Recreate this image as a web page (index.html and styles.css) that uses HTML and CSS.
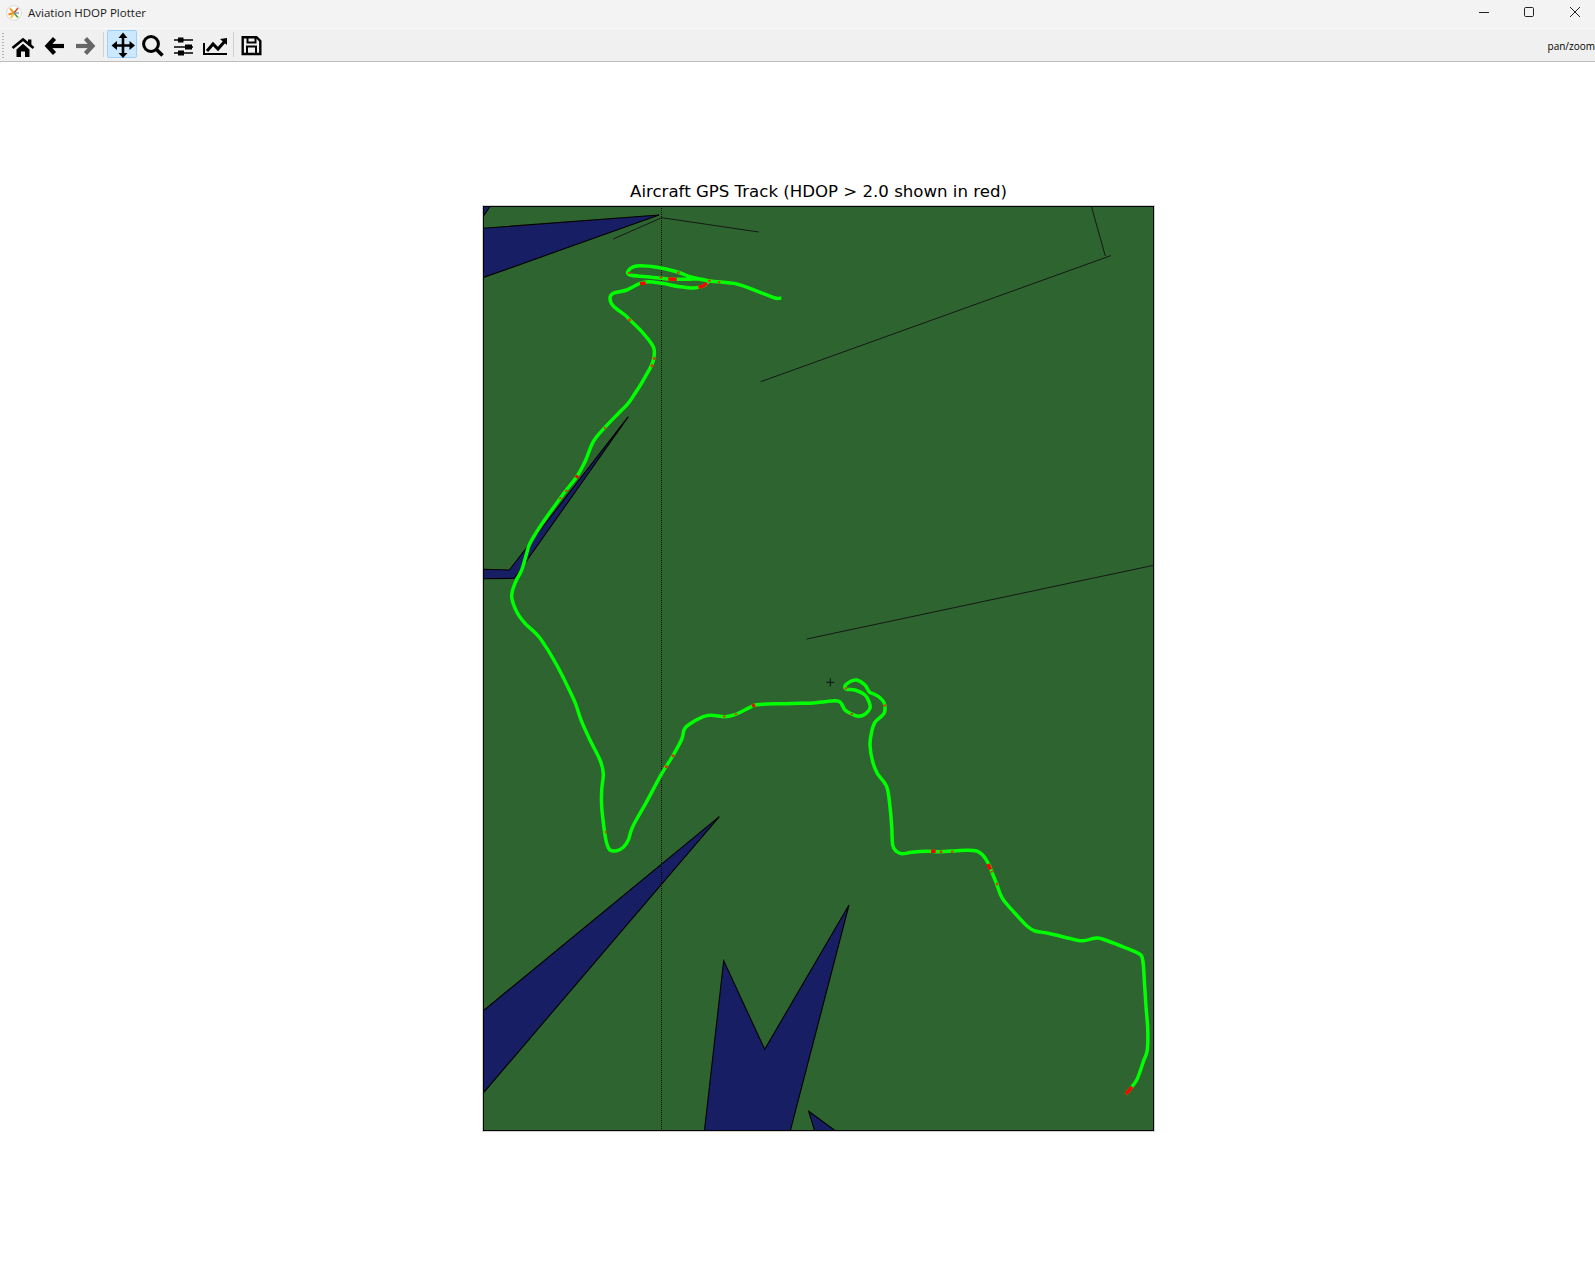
FILE: index.html
```html
<!DOCTYPE html>
<html lang="en">
<head>
<meta charset="utf-8">
<title>Aviation HDOP Plotter</title>
<link rel="stylesheet" href="styles.css">
</head>
<body>
<header class="titlebar">
  <svg class="app-icon" viewBox="0 0 16 16">
    <circle cx="8" cy="8" r="7.4" fill="#fdfcf8" stroke="#d4d0c8" stroke-width="0.8"/>
    <path d="M8 8 L4 3.5" stroke="#f0a030" stroke-width="2"/>
    <path d="M8 8 L12 3" stroke="#c84a2a" stroke-width="1.4"/>
    <path d="M8 8 L2.5 9.5" stroke="#f08020" stroke-width="2.2"/>
    <path d="M8 8 L5 13" stroke="#f5c040" stroke-width="2"/>
    <path d="M8 8 L12 12.5" stroke="#5a9a40" stroke-width="1.6"/>
    <path d="M8 8 L13 8" stroke="#6a88b8" stroke-width="1.2"/>
  </svg>
  <span class="app-title">Aviation HDOP Plotter</span>
  <div class="window-controls">
    <svg class="win-btn" viewBox="0 0 10 10"><path d="M0 5.5H10" class="win-stroke"/></svg>
    <svg class="win-btn" viewBox="0 0 10 10"><rect x="0.5" y="0.5" width="9" height="9" rx="1.2" class="win-stroke"/></svg>
    <svg class="win-btn" viewBox="0 0 10 10"><path d="M0 0L10 10M10 0L0 10" class="win-stroke"/></svg>
  </div>
</header>

<nav class="toolbar">
  <div class="grip"></div>
  <button class="tool" aria-label="Home"><svg viewBox="0 0 30 28">
    <polyline points="4.5,18 15,9.5 25.5,18" fill="none" stroke="#000" stroke-width="2.6"/>
    <rect x="20" y="9.5" width="3.4" height="6"/>
    <path d="M8.5 19.5L15 13.8L21.5 19.5V27H17V21.5H13V27H8.5Z"/>
  </svg></button>
  <button class="tool" aria-label="Back"><svg viewBox="0 0 30 28">
    <polyline points="15.5,8.5 8.5,16 15.5,23.5" fill="none" stroke="#000" stroke-width="4.2"/>
    <path d="M9 16H25" stroke="#000" stroke-width="4.2"/>
  </svg></button>
  <button class="tool" aria-label="Forward"><svg viewBox="0 0 30 28">
    <polyline points="15.5,8.5 22.5,16 15.5,23.5" fill="none" stroke="#666" stroke-width="4.2"/>
    <path d="M6 16H22" stroke="#666" stroke-width="4.2"/>
  </svg></button>
  <div class="sep sep-a"></div>
  <button class="tool active" aria-label="Pan"><svg viewBox="0 0 30 28">
    <path d="M16 6V25M7 15.5H25" stroke="#000" stroke-width="2.6"/>
    <path d="M16 2.5L11.5 8H20.5ZM16 28L11.5 23H20.5ZM4.5 15.5L10 11V20ZM28 15.5L22.5 11V20Z"/>
  </svg></button>
  <button class="tool" aria-label="Zoom"><svg viewBox="0 0 30 28">
    <circle cx="13" cy="14" r="7.4" fill="none" stroke="#000" stroke-width="3"/>
    <path d="M18.5 19.5L24.5 25.5" stroke="#000" stroke-width="3.6"/>
  </svg></button>
  <button class="tool" aria-label="Subplots"><svg viewBox="0 0 30 28">
    <path d="M5 10H24M5 17H24M5 23H24" stroke="#000" stroke-width="1.6"/>
    <rect x="9" y="7.5" width="5.5" height="5"/>
    <rect x="16" y="14.5" width="7" height="5"/>
    <rect x="9" y="20.5" width="6" height="5"/>
  </svg></button>
  <button class="tool" aria-label="Customize"><svg viewBox="0 0 30 28">
    <polyline points="4,13 4,24 27,24" fill="none" stroke="#000" stroke-width="2"/>
    <polyline points="7,21 13,14 18,19 25,11" fill="none" stroke="#000" stroke-width="3"/>
    <path d="M20 9L27 8V15Z"/>
  </svg></button>
  <div class="sep sep-b"></div>
  <button class="tool" aria-label="Save"><svg viewBox="0 0 30 28">
    <path d="M5.7 7.2H19.5L23.3 11V24H5.7Z" fill="none" stroke="#000" stroke-width="2.4"/>
    <path d="M10.5 7.5V12.5H18.5V7.5M10 24V16.5H19V24" fill="none" stroke="#000" stroke-width="2"/>
  </svg></button>
  <span class="mode">pan/zoom</span>
</nav>

<main class="canvas">
  <figure class="figure">
    <figcaption class="plot-title">Aircraft GPS Track (HDOP &gt; 2.0 shown in red)</figcaption>
    <svg class="axes" viewBox="483 206 671 925">
      <rect class="land" x="483" y="206" width="671" height="925"/>
      <polygon class="water" points="483,228.3 659,215 483,277.7"/>
      <polygon class="water" points="483,206.5 490,206.5 483,216.7"/>
      <polygon class="water" points="628.3,416.7 509.3,570 483,569.3 483,578.7 514.3,578.3"/>
      <polygon class="water" points="483,1011 719.3,816.7 483,1093.3"/>
      <polygon class="water" points="704.3,1132 723.7,960.7 764.7,1049.3 849,905 790,1132"/>
      <polygon class="water" points="808.7,1111.3 837,1132 815,1132"/>
      <polyline class="coast" points="613.3,239 661.7,217.7 758.7,232"/>
      <polyline class="coast" points="760.7,381.7 1110.7,255.7"/>
      <polyline class="coast" points="1091.3,206 1105.3,256"/>
      <polyline class="coast" points="806.7,639 1155,565"/>
      <line class="meridian" x1="661.5" y1="206" x2="661.5" y2="1131"/>
      <path class="marker" d="M826.3 682.3H834.3M830.3 678.3V686.3"/>
      <path class="track" data-points="1126,1094.3 1132.7,1085.7 1136.7,1080 1140,1071.7 1143.3,1061.7 1147.3,1050 1147.7,1028.3 1146,1006.7 1144.3,980 1142.7,960 1138.3,953.3 1118.3,945 1101.7,938.7 1095,938.3 1083.3,940.7 1075,939.7 1048.3,933.3 1035,931 1026.7,925.7 1015,913.3 1004,900.7 1000,893.3 996.7,884 991.7,871.7 988.3,863.3 982.7,855 976.7,851 966.7,850.3 956.7,850.7 940,851.7 926.7,851.3 911.7,852.3 901.7,853.7 896,851 892.7,845 891.7,826.7 890,806.7 886.7,786.7 877.3,773.3 872.7,761.7 870,745 871.7,731.7 875,722.3 881.7,716 884.7,711.7 884.3,703.3 880,697.7 873.3,693.7 869.3,692 865,685 856.7,680 850,681.7 845,686 846.7,689.3 855,690 865,695 869,701.7 870,708.3 865,714.3 858.3,716.3 851.7,714 845,710 839,701.3 825,701.7 813.3,703 800,703.3 778.3,703.7 756.7,704.7 750,707.3 735,714.7 725,716.7 711.7,715.3 703.3,716.7 688.3,725 684,730 681.7,739.3 673.3,755 666,766.7 660,776.7 646.7,801.7 632.7,826.7 628.3,840 623.3,847.3 616.7,850.7 610,850 606.7,843.3 604.3,830 601.7,806.7 601.7,790 603.3,773.3 600,760 590,740 581.7,721.7 576,705 571.7,695 556.7,665 539.3,637.3 525,623.3 516.7,611.7 511.7,596.7 515,583.3 521.7,570 526.7,553.3 530,543.3 540,526.7 551.7,510 565,491.7 576.7,476.7 585,461.7 593.3,441.7 605,427.3 620,411.7 630.7,400 650,368.3 654,356.7 653.3,346.7 643.3,333.3 630,320 625,315 613.3,306 610,298.3 613.3,293.3 626.7,290 640,283.3 648.3,281.7 661.7,283.3 680,286.7 693.3,288 703.3,286 707.3,281.7 700,279 686.7,279.3 670,279 646.7,276.7 630,275 628.3,270.7 636.7,266 656.7,267.3 676.7,271.7 690,276.7 710,281 736.7,284 760,292.3 775,298 781.3,298"/>
      <path class="hdop-high" d="M1126 1094.3L1132 1086.7M640 283.6L645.7 283M668.3 279L676.7 279.3M698.5 287.3L703.3 286L707 283M931 851.3H935.7M988 864L990.5 869.5M576 477.8L577.8 475.5M752 706L755 704.8"/>
      <path class="hdop-thin" d="M629 272L629.5 274M661 276.5V278.5M678.3 271.5V273.5M709.3 279.8V281.8M719 281.3V283.3M653 358.5H655.5M651.5 364.5L652.5 367M628.5 319L630.5 321M566 490L566.5 491.5M560 497.5L560.5 499M604 428H605.5M846 687.5V689.5M851.5 713L852 715M884.7 704.5V706.5M941 850.5V853M952.3 850.5V852.5M991.5 871L992 872.5M996 884H998M672 755L674 756.5M665 766L667.5 767.3M724.3 715.5V717.5M736 713.3V715M605 832H606.5"/>
      <rect class="frame" x="483.5" y="206.5" width="670" height="924"/>
    </svg>
  </figure>
</main>
<script src="track.js"></script>
</body>
</html>
```

FILE: styles.css
```css
html, body {
  margin: 0;
  height: 100%;
  background: #fff;
  overflow: hidden;
}

.titlebar {
  display: flex;
  align-items: center;
  height: 28px;
  padding: 0 0 3px 6px;
  box-sizing: border-box;
  background: #f3f3f3;
  font-family: "Open Sans", "Noto Sans", sans-serif;
  font-size: 11.5px;
  color: #1a1a1a;
}

.app-icon {
  width: 16px;
  height: 16px;
  margin-right: 6px;
}

.window-controls {
  display: flex;
  margin: 0 0 2px auto;
  padding-right: 15px;
  gap: 35px;
}

.win-btn {
  width: 10px;
  height: 10px;
  overflow: visible;
}

.win-btn:last-child {
  margin-left: 1px;
}

.win-stroke {
  fill: none;
  stroke: #222;
  stroke-width: 1;
}

.toolbar {
  display: flex;
  align-items: center;
  height: 28px;
  padding: 1px 0 3px 8px;
  position: relative;
  background: #f0f0f0;
  border-bottom: 1px solid #bdbdbd;
  border-top: 1px solid #fafafa;
  font-family: "Open Sans", "Noto Sans", sans-serif;
}

.grip {
  position: absolute;
  left: 2px;
  top: 4px;
  width: 2px;
  height: 25px;
  background: repeating-linear-gradient(to bottom, #b5b5b5 0 1px, transparent 1px 3px);
}

.tool {
  width: 30px;
  height: 28px;
  padding: 0;
  border: 1px solid transparent;
  border-radius: 2px;
  background: transparent;
  box-sizing: border-box;
  flex: none;
  position: relative;
}

.tool svg {
  position: absolute;
  left: -1px;
  top: -1px;
  width: 30px;
  height: 28px;
  overflow: visible;
}

.tool + .tool {
  margin-left: 1px;
}

.active {
  background: #cce8ff;
  border-color: #99d1ff;
}

.sep {
  width: 1px;
  height: 25px;
  background: #d0d0d0;
  flex: none;
}

.sep-a {
  margin: 0 3px 0 3px;
}

.sep-b {
  margin: 0 3px 0 3px;
}

.mode {
  margin: 4px 0 0 auto;
  font-size: 10px;
  line-height: 15px;
  color: #000;
  white-space: nowrap;
}

.canvas {
  padding: 120px 0 0 483px;
}

.figure {
  display: flex;
  flex-direction: column;
  width: 671px;
  margin: 0;
}

.plot-title {
  height: 20px;
  margin-bottom: 4px;
  font-family: "DejaVu Sans", sans-serif;
  font-size: 16.6px;
  line-height: 20px;
  color: #000;
  text-align: center;
  white-space: nowrap;
}

.axes {
  display: block;
  width: 671px;
  height: 925px;
  outline: 1px solid #d0d0d0;
}

.land {
  fill: #2e6430;
}

.water {
  fill: #181e64;
  stroke: #000;
  stroke-width: 1.1;
}

.coast {
  fill: none;
  stroke: #111;
  stroke-width: 0.9;
}

.meridian {
  stroke: #000;
  stroke-width: 1;
  stroke-dasharray: 1 1;
}

.marker {
  fill: none;
  stroke: #111;
  stroke-width: 1;
}

.track {
  fill: none;
  stroke: #00ff00;
  stroke-width: 3.5;
  stroke-linejoin: round;
}

.hdop-high {
  fill: none;
  stroke: #f00;
  stroke-width: 3.4;
}

.hdop-thin {
  fill: none;
  stroke: #e8300a;
  stroke-width: 2.6;
}

.frame {
  fill: none;
  stroke: #000;
  stroke-width: 1;
}
```

FILE: track.js
```js
// Turns the recorded track points into a smooth Catmull-Rom curve.
document.querySelectorAll('.track').forEach(function (el) {
  var p = el.dataset.points.trim().split(/\s+/).map(function (s) {
    return s.split(',').map(Number);
  });
  var d = 'M' + p[0].join(' ');
  for (var i = 0; i < p.length - 1; i++) {
    var a = p[Math.max(i - 1, 0)];
    var b = p[i];
    var c = p[i + 1];
    var e = p[Math.min(i + 2, p.length - 1)];
    d += 'C' + (b[0] + (c[0] - a[0]) / 6).toFixed(2) + ' ' + (b[1] + (c[1] - a[1]) / 6).toFixed(2) +
      ' ' + (c[0] - (e[0] - b[0]) / 6).toFixed(2) + ' ' + (c[1] - (e[1] - b[1]) / 6).toFixed(2) +
      ' ' + c[0] + ' ' + c[1];
  }
  el.setAttribute('d', d);
});
```
